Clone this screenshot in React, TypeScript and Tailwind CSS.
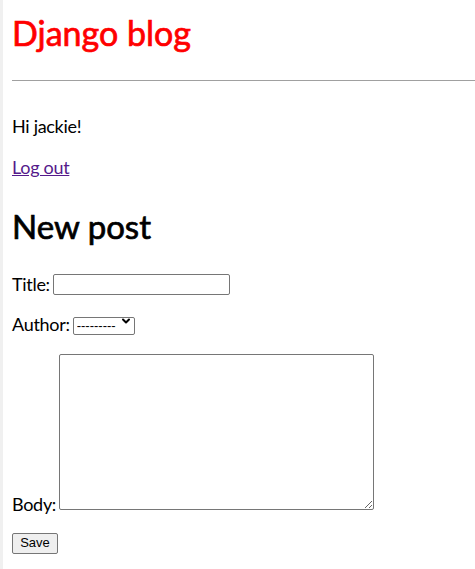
import { ChevronDown } from 'lucide-react';

export default function App() {
  return (
    <div className="min-h-screen flex bg-white font-['Lato','Liberation_Sans',sans-serif] text-black">
      {/* left edge strip */}
      <div className="w-[3px] shrink-0 bg-[#f0f0f0]" />

      <div className="flex-1 pl-[9px]">
        <h1 className="pt-[13px] text-[34px] leading-[40px] text-[#ff0000] [-webkit-text-stroke:0.7px_#ff0000]">
          Django blog
        </h1>
        <hr className="mt-[27px] border-t border-[#a0a0a0]" />

        <p className="mt-[34px] text-[18px] leading-[22px] tracking-[-0.3px]">Hi jackie!</p>
        <p className="mt-[19px] text-[18px] leading-[22px] tracking-[-0.3px]">
          <a href="#" className="underline text-[#551a8b]">Log out</a>
        </p>

        <h2 className="mt-[28px] text-[33px] leading-[40px] [-webkit-text-stroke:0.7px_#000000]">
          New post
        </h2>

        <form className="flex flex-col text-[18px] leading-[22px] tracking-[-0.3px]">
          <div className="mt-[27px] flex items-center gap-[3px]">
            <label htmlFor="title">Title:</label>
            <input
              id="title"
              type="text"
              className="w-[177px] h-[21px] border border-[#767676] rounded-[2px] bg-white"
            />
          </div>

          <div className="mt-[17px] flex items-center gap-[3px]">
            <label htmlFor="author">Author:</label>
            <div className="relative">
              <select
                id="author"
                className="appearance-none w-[62px] h-[18px] pl-[3px] border border-[#767676] rounded-[2px] bg-white font-['Liberation_Sans',sans-serif] text-[13px] leading-[16px] tracking-normal"
              >
                <option>---------</option>
              </select>
              <ChevronDown
                size={12}
                strokeWidth={4}
                className="absolute right-[3px] top-[3px] pointer-events-none"
              />
            </div>
          </div>

          <div className="mt-[19px] flex items-end gap-[3px]">
            <label htmlFor="body" className="mb-[-5px]">Body:</label>
            <textarea
              id="body"
              className="w-[315px] h-[156px] border border-[#767676] rounded-[2px] bg-white"
            />
          </div>

          <div className="mt-[19px]">
            <button
              type="button"
              className="w-[46px] h-[21px] border border-[#767676] rounded-[2px] bg-[#efefef] font-['Liberation_Sans',sans-serif] text-[13px] leading-[16px] tracking-normal"
            >
              Save
            </button>
          </div>
        </form>
      </div>
    </div>
  );
}
